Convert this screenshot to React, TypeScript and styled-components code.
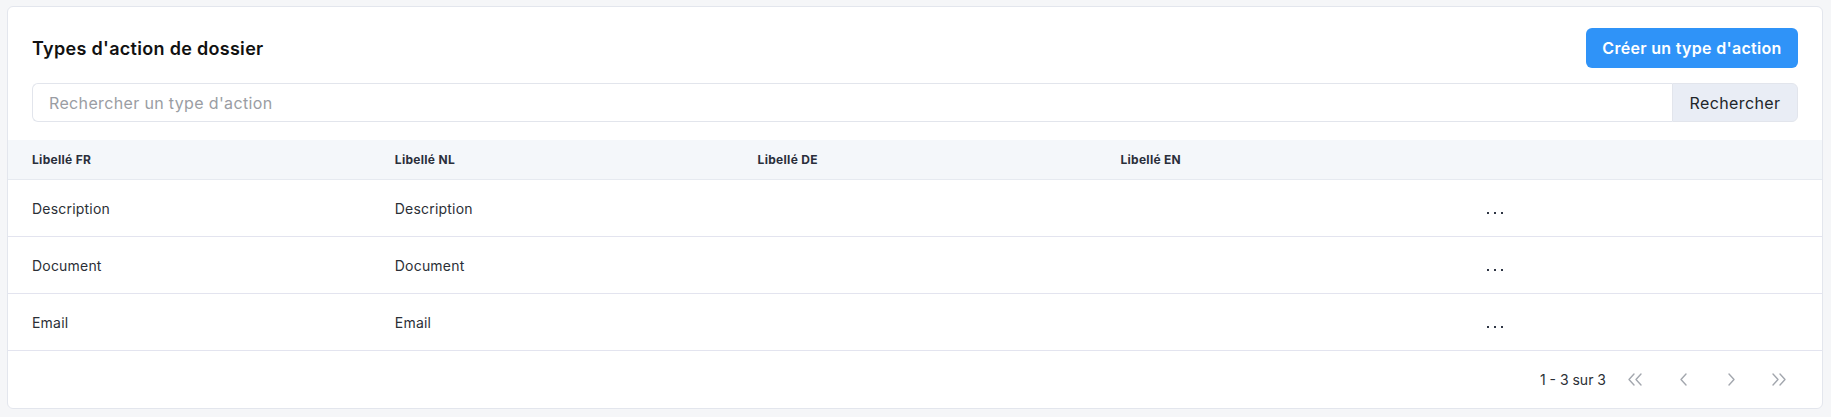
import React from "react";
import styled, { createGlobalStyle } from "styled-components";

const Global = createGlobalStyle`
  html, body { margin: 0; padding: 0; background: #f5f6f8; }
  body { font-family: Inter, "Noto Sans", sans-serif; color: #212529; }
  * { box-sizing: border-box; }
`;

const Page = styled.div`
  padding: 6px 8px 0 7px;
`;

const Card = styled.div`
  background: #fff;
  border: 1px solid #e3e6ed;
  border-radius: 6px;
  overflow: hidden;
`;

const Top = styled.div`
  padding: 21px 24px 18px 24px;
  display: flex;
  flex-direction: column;
  gap: 15px;
`;

const HeadRow = styled.div`
  display: flex;
  align-items: center;
  justify-content: space-between;
  height: 40px;
`;

const Title = styled.h1`
  margin: 0;
  font-size: 18px;
  font-weight: 600;
  color: #111;
  letter-spacing: 0.3px;
`;

const PrimaryButton = styled.button`
  width: 212px;
  height: 40px;
  border: none;
  border-radius: 6px;
  background: #2f93f8;
  color: #fff;
  font-family: inherit;
  font-size: 16px;
  font-weight: 600;
  letter-spacing: 0.3px;
  cursor: pointer;
`;

const SearchGroup = styled.div`
  display: flex;
  height: 39px;
`;

const SearchInput = styled.input`
  flex: 1;
  border: 1px solid #e2e5ec;
  border-right: none;
  border-radius: 6px 0 0 6px;
  padding: 0 16px;
  font-family: inherit;
  font-size: 16px;
  letter-spacing: 0.35px;
  color: #212529;
  outline: none;
  &::placeholder { color: #9a9da3; }
`;

const SearchButton = styled.button`
  width: 126px;
  border: 1px solid #e2e5ec;
  border-radius: 0 6px 6px 0;
  background: #e9edf5;
  font-family: inherit;
  font-size: 16px;
  letter-spacing: 0.4px;
  color: #212529;
  cursor: pointer;
`;

const Grid = styled.div<{ $head?: boolean }>`
  display: grid;
  grid-template-columns: repeat(5, 1fr);
  align-items: center;
  height: ${(p) => (p.$head ? "40px" : "57px")};
  background: ${(p) => (p.$head ? "#f4f7fa" : "#fff")};
  border-bottom: 1px solid ${(p) => (p.$head ? "#e6eaf0" : "#e3e4ef")};
`;

const HeadCell = styled.div`
  padding-left: 24px;
  font-size: 12px;
  font-weight: 700;
  letter-spacing: 0.3px;
  color: #2a2f3b;
`;

const Cell = styled.div`
  padding-left: 24px;
  font-size: 14px;
  letter-spacing: 0.2px;
  color: #2b2f36;
`;

const Dots = styled.span`
  display: inline-flex;
  gap: 5px;
  padding-left: 4px;
  & > i {
    width: 2px;
    height: 2px;
    background: #2f3645;
    display: block;
  }
`;

const Footer = styled.div`
  height: 57px;
  display: flex;
  align-items: center;
  justify-content: flex-end;
  padding-right: 19px;
`;

const Count = styled.span`
  font-size: 14px;
  color: #2b2f36;
  margin-right: 5px;
`;

const PageBtn = styled.button`
  width: 48px;
  height: 36px;
  border: none;
  background: transparent;
  display: flex;
  align-items: center;
  justify-content: center;
  padding: 0;
  color: #a3a7ae;
`;

const Chev = ({ dir, double }: { dir: "l" | "r"; double?: boolean }) => {
  const single = (ox: number) =>
    dir === "l"
      ? `M${ox + 6} 1 L${ox + 1} 6.5 L${ox + 6} 12`
      : `M${ox + 1} 1 L${ox + 6} 6.5 L${ox + 1} 12`;
  const w = double ? 15 : 7;
  return (
    <svg width={w} height={13} viewBox={`0 0 ${w} 13`} fill="none" stroke="currentColor" strokeWidth={1.4} strokeLinecap="round" strokeLinejoin="round">
      <path d={single(0)} />
      {double && <path d={single(7)} />}
    </svg>
  );
};

const rows = [
  ["Description", "Description"],
  ["Document", "Document"],
  ["Email", "Email"],
];

export default function App() {
  return (
    <>
      <Global />
      <Page>
        <Card>
          <Top>
            <HeadRow>
              <Title>Types d'action de dossier</Title>
              <PrimaryButton>Créer un type d'action</PrimaryButton>
            </HeadRow>
            <SearchGroup>
              <SearchInput placeholder="Rechercher un type d'action" />
              <SearchButton>Rechercher</SearchButton>
            </SearchGroup>
          </Top>
          <Grid $head>
            <HeadCell>Libellé FR</HeadCell>
            <HeadCell>Libellé NL</HeadCell>
            <HeadCell>Libellé DE</HeadCell>
            <HeadCell>Libellé EN</HeadCell>
            <HeadCell />
          </Grid>
          {rows.map((r, i) => (
            <Grid key={i}>
              <Cell>{r[0]}</Cell>
              <Cell>{r[1]}</Cell>
              <Cell />
              <Cell />
              <Cell>
                <Dots>
                  <i />
                  <i />
                  <i />
                </Dots>
              </Cell>
            </Grid>
          ))}
          <Footer>
            <Count>1 - 3 sur 3</Count>
            <PageBtn><Chev dir="l" double /></PageBtn>
            <PageBtn><Chev dir="l" /></PageBtn>
            <PageBtn><Chev dir="r" /></PageBtn>
            <PageBtn><Chev dir="r" double /></PageBtn>
          </Footer>
        </Card>
      </Page>
    </>
  );
}
